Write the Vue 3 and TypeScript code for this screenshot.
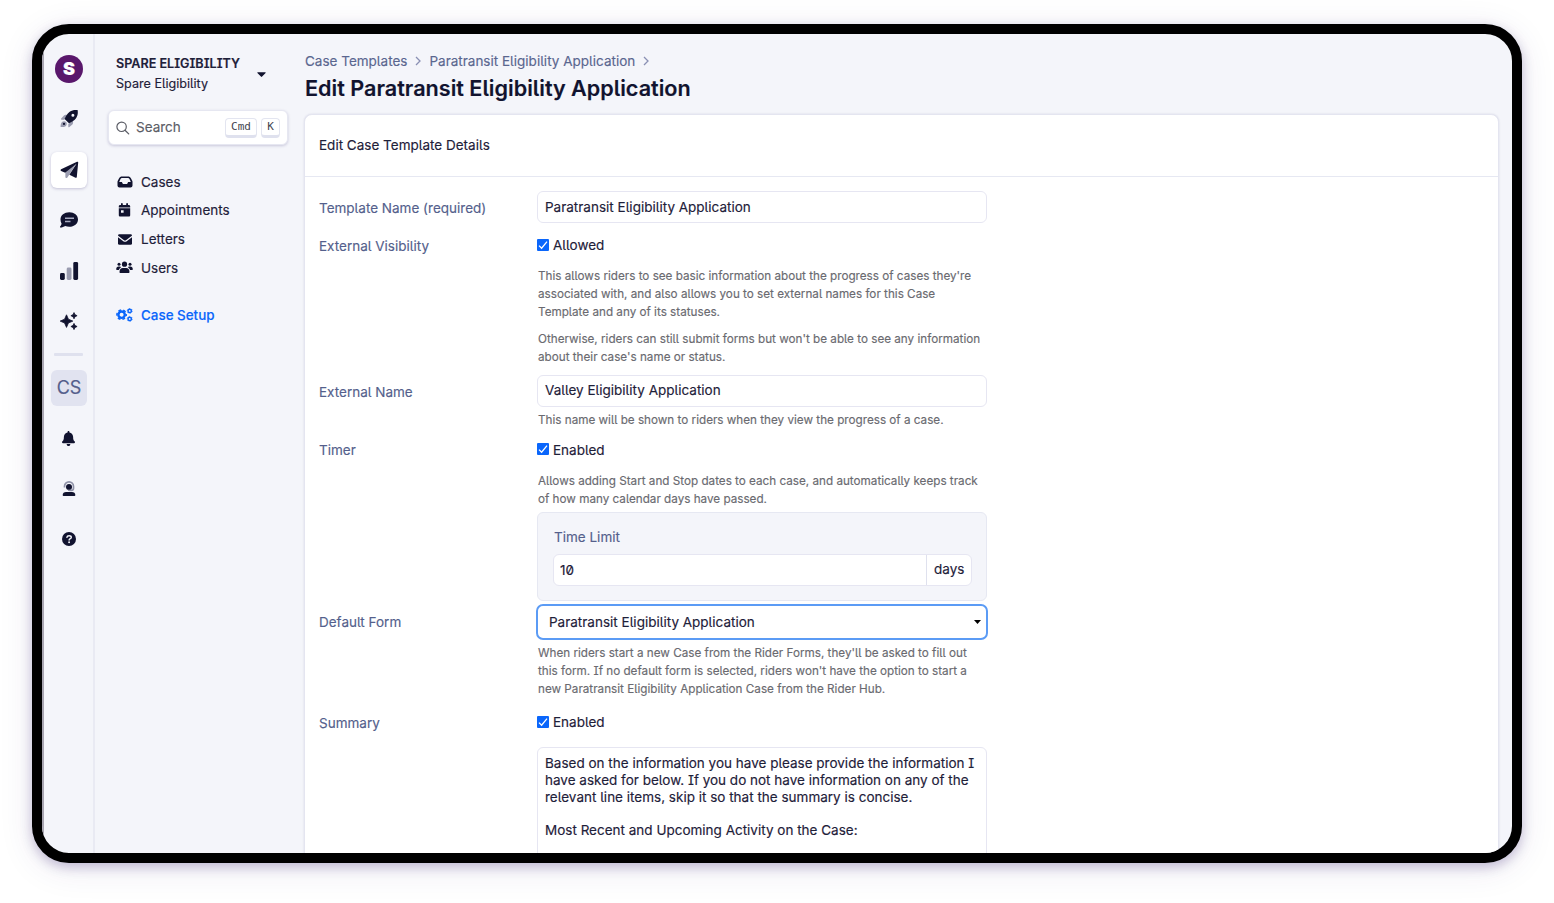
<script setup lang="ts">
interface NavItem { label: string; icon: string }

const nav: NavItem[] = [
  { label: 'Cases', icon: 'inbox' },
  { label: 'Appointments', icon: 'calendar' },
  { label: 'Letters', icon: 'envelope' },
  { label: 'Users', icon: 'users' },
]
const templateName = 'Paratransit Eligibility Application'
const externalName = 'Valley Eligibility Application'
</script>

<template>
  <div class="stage">
    <div class="device">
      <aside class="rail">
        <div class="rail-item">
          <span class="logo">S</span>
        </div>
        <div class="rail-item">
          <svg width="20" height="20" viewBox="0 0 20 20">
            <path class="dim" d="M2.200 9.600 5 6.400c.5-.5 1.100-.7 1.800-.6l2 .2-3.600 4.800-2.600-.1c-.6 0-.8-.6-.4-1.100zM14 11.200l.1 2.400c0 .7-.2 1.300-.7 1.800l-3 2.700c-.5.4-1.100.2-1.100-.4V14.900zM3 13c1.300-1.200 3.200-1 4.100 0s1 2.700-.2 3.900c-1 1-3.300 1.300-5.300 1.200C1.500 16.200 1.900 14 3 13z" />
            <path class="ink" fill-rule="evenodd" d="M18.600 1.100c.5 2.500.3 5.400-1.400 7.800-1.700 2.400-4.300 4-7.200 5.300L5.600 9.900c1.200-2.800 2.700-5.500 5.100-7.200C13.100 1 16.100.6 18.600 1.100zM13.900 7.800a1.500 1.500 0 1 0 0-3 1.500 1.500 0 0 0 0 3z" />
            <circle class="ink" cx="5" cy="14.900" r="1.100" />
          </svg>
        </div>
        <div class="rail-item selected">
          <svg width="19" height="18" viewBox="0 0 19 18">
            <path class="dim" d="M5.400 11.700 16.500 2 9.400 13.600 7.200 16.700c-.5.6-1.800.3-1.800-.5z" />
            <path class="ink" d="M18.200 1.500 16.800 15.900c-.1.700-.7 1-1.300.8l-6.100-2.900L16.500 2.800 5.200 11.800 1.100 10c-.8-.4-.7-1.300 0-1.700L17 .8c.7-.4 1.300 0 1.200.7z" />
          </svg>
        </div>
        <div class="rail-item">
          <svg width="20" height="18" viewBox="0 0 20 18">
            <path class="ink" d="M10.300 1.300c4.900 0 8.700 3 8.700 7.200s-3.800 7.300-8.700 7.300c-1.500 0-2.900-.3-4.100-.8-1.200.9-3 1.500-4.800 1.500-.5 0-.7-.6-.3-1 .8-.8 1.300-1.800 1.500-2.700C1.900 11.500 1.500 10 1.500 8.500c0-4.200 3.900-7.200 8.800-7.200z" />
            <path d="M6 7.200h9M6 10.600h5.500" fill="none" stroke="#a8abc0" stroke-width="1.500" />
          </svg>
        </div>
        <div class="rail-item bars">
          <svg width="20" height="20" viewBox="0 0 20 20">
            <rect class="ink" x="1" y="12" width="4.800" height="7" rx="1.400" />
            <rect class="dim" x="7.700" y="6.500" width="4.800" height="12.500" rx="1.400" />
            <rect class="ink" x="14.300" y="1" width="4.800" height="18" rx="1.400" />
          </svg>
        </div>
        <div class="rail-item sparkle">
          <svg width="20" height="18" viewBox="0 0 20 18">
            <path class="ink" d="M7.500 2.800 9.400 7.200 13.800 9.100 9.400 11 7.500 15.400 5.600 11 1.200 9.100 5.600 7.200z M15 .6l1 2.100 2.100 1-2.100 1L15 6.800l-1-2.100-2.100-1 2.100-1zM15 11.400l1 2.100 2.100 1-2.100 1-1 2.100-1-2.100-2.100-1 2.100-1z" stroke="#11132f" stroke-width=".8" stroke-linejoin="round" />
          </svg>
        </div>
        <div class="divider"></div>
        <div class="avatar">CS</div>
        <div class="rail-item nudge">
          <svg width="13" height="15" viewBox="0 0 448 512">
            <path class="ink" d="M224 0c-17.700 0-32 14.300-32 32V51.200C119 66 64 130.600 64 208v18.800c0 47-17.300 92.400-48.500 127.600l-7.400 8.300c-8.400 9.400-10.400 22.900-5.300 34.400S19.400 416 32 416H416c12.600 0 24-7.400 29.200-18.900s3.100-25-5.300-34.400l-7.400-8.300C401.300 319.200 384 273.900 384 226.800V208c0-77.400-55-142-128-156.800V32c0-17.700-14.300-32-32-32zm45.300 493.300c12-12 18.700-28.300 18.700-45.300H160c0 17 6.700 33.300 18.700 45.300s28.300 18.700 45.300 18.700s33.300-6.700 45.300-18.700z" />
          </svg>
        </div>
        <div class="rail-item nudge">
          <svg width="14" height="16" viewBox="0 0 14 16">
            <path d="M2.500 6.600V5.400a4.500 4.500 0 0 1 9 0v1.800c0 1.300-.9 2.200-2.200 2.200H7.300" fill="none" stroke="#8f92a8" stroke-width="1.700" />
            <circle class="ink" cx="7" cy="5.900" r="3" />
            <path class="ink" d="M4 11h6c1.900 0 3.300 1.200 3.300 2.900 0 .7-.4 1.100-1.100 1.100H1.800c-.7 0-1.100-.4-1.100-1.100C.7 12.200 2.100 11 4 11z" />
            <path d="M6 9.300h3.300" stroke="#8f92a8" stroke-width="1.200" />
          </svg>
        </div>
        <div class="rail-item">
          <svg width="14" height="14" viewBox="0 0 14 14">
            <circle class="ink" cx="7" cy="7" r="7" />
            <path d="M4.900 5.400c.1-1.100 1-1.700 2.200-1.700s2.200.7 2.200 1.700c0 1.300-2.200 1.300-2.200 2.700" fill="none" stroke="#f4f5fa" stroke-width="1.400" stroke-linecap="round" />
            <circle cx="7.100" cy="10.200" r=".95" fill="#f4f5fa" />
          </svg>
        </div>
      </aside>

      <nav class="side">
        <div class="org">
          <div>
            <div class="org-name">SPARE ELIGIBILITY</div>
            <div class="org-sub">Spare Eligibility</div>
          </div>
          <svg width="9" height="5" viewBox="0 0 9 5"><path class="ink" d="M.8.300h7.400c.5 0 .7.500.4.800L5.100 4.600a.8.800 0 0 1-1.200 0L.4 1.100C.1.800.3.300.8.300z" /></svg>
        </div>
        <div class="search">
          <svg width="14" height="14" viewBox="0 0 14 14"><circle cx="5.600" cy="5.800" r="4.700" fill="none" stroke="#5b5d66" stroke-width="1.200" /><path d="M9 9.300 12.700 12.900" stroke="#5b5d66" stroke-width="1.300" stroke-linecap="round" /></svg>
          <span class="search-text">Search</span>
          <kbd class="k-cmd">Cmd</kbd>
          <kbd class="k-k">K</kbd>
        </div>
        <ul class="menu">
          <li v-for="n in nav" :key="n.label">
            <span class="mi">
              <svg v-if="n.icon === 'inbox'" width="16" height="12" viewBox="0 0 16 12">
                <path class="ink" fill-rule="evenodd" d="M5 .5h6c1.300 0 2.300.6 2.900 1.700l1.300 2.500c.2.400.3.800.3 1.300v3.500c0 1.100-.9 2-2 2h-11c-1.100 0-2-.9-2-2V6c0-.5.1-.9.300-1.300l1.300-2.500C2.700 1.100 3.700.5 5 .5zM5 2.100c-.7 0-1.200.3-1.500.9L2.200 6h2.700l1 1.900h4.200l1-1.900h2.700L12.500 3c-.3-.6-.8-.9-1.500-.9z" />
              </svg>
              <svg v-else-if="n.icon === 'calendar'" width="13" height="14" viewBox="0 0 13 14">
                <path class="ink" fill-rule="evenodd" d="M3 .9a.9.900 0 0 1 1.800 0V2h3.400V.9a.9.900 0 0 1 1.800 0V2h.8c.8 0 1.400.6 1.400 1.300v1.100H.8V3.300C.8 2.600 1.400 2 2.200 2H3zM.8 5.300h11.400v6.900c0 .7-.6 1.300-1.400 1.300H2.200c-.8 0-1.400-.6-1.400-1.300zM3 7.300v2.400h2.600V7.300z" />
              </svg>
              <svg v-else-if="n.icon === 'envelope'" width="14" height="11" viewBox="0 0 14 11">
                <rect class="ink" width="14" height="10.600" y=".2" rx="1.400" />
                <path d="M-.2 2.300 6 6.900c.6.400 1.400.4 2 0l6.200-4.600" fill="none" stroke="#f4f5fa" stroke-width="1.200" />
              </svg>
              <svg v-else width="17" height="13" viewBox="0 0 17 13">
                <g class="ink">
                  <circle cx="8.500" cy="3.200" r="2.600" /><circle cx="3" cy="3.200" r="1.500" /><circle cx="14" cy="3.200" r="1.500" />
                  <path d="M6.800 7h3.400c2 0 3.300 1.600 3.300 3.900 0 .6-.4 1.100-1 1.100h-8c-.6 0-1-.5-1-1.100C3.500 8.600 4.800 7 6.800 7zM.2 8.300c0-1.600 1-2.700 2.400-2.700h1c.7 0 1.300.2 1.600.6-1.200.6-2 1.600-2.300 2.700H.8c-.3 0-.6-.2-.6-.6zM16.800 8.300c0-1.600-1-2.700-2.400-2.700h-1c-.7 0-1.300.2-1.600.6 1.200.6 2 1.600 2.300 2.700h2.100c.3 0 .6-.2.6-.6z" />
                </g>
              </svg>
            </span>
            <span>{{ n.label }}</span>
          </li>
          <li class="active">
            <span class="mi">
              <svg width="17" height="14" viewBox="0 0 17 14" fill="none" stroke="#0a66fb">
                <circle cx="5.600" cy="6.700" r="3.200" stroke-width="2.400" />
                <circle cx="5.600" cy="6.700" r="4.700" stroke-width="1.500" stroke-dasharray="2.800 2.122" stroke-dashoffset="1.400" />
                <circle cx="13.700" cy="2.900" r="1.700" stroke-width="1.500" />
                <circle cx="13.700" cy="2.900" r="2.500" stroke-width=".7" stroke-dasharray="1.310 1.310" />
                <circle cx="13.700" cy="10.900" r="1.700" stroke-width="1.500" />
                <circle cx="13.700" cy="10.900" r="2.500" stroke-width=".7" stroke-dasharray="1.310 1.310" />
              </svg>
            </span>
            <span>Case Setup</span>
          </li>
        </ul>
      </nav>

      <main class="main">
        <div class="crumbs">
          <span>Case Templates</span>
          <svg width="6" height="10" viewBox="0 0 6 10"><path d="M1 1l4 4-4 4" /></svg>
          <span>{{ templateName }}</span>
          <svg width="6" height="10" viewBox="0 0 6 10"><path d="M1 1l4 4-4 4" /></svg>
        </div>
        <h1>Edit {{ templateName }}</h1>
        <section class="card">
          <header>Edit Case Template Details</header>
          <div class="form">
            <div class="row r-name">
              <label>Template Name (required)</label>
              <div class="input">{{ templateName }}</div>
            </div>
            <div class="row r-vis">
              <label>External Visibility</label>
              <div>
                <div class="check"><i><svg width="12" height="12" viewBox="0 0 12 12"><path d="M2 6.600 4.600 9.200 10 2.700" /></svg></i><span>Allowed</span></div>
                <p class="help first">This allows riders to see basic information about the progress of cases they're<br>associated with, and also allows you to set external names for this Case<br>Template and any of its statuses.</p>
                <p class="help second">Otherwise, riders can still submit forms but won't be able to see any information<br>about their case's name or status.</p>
              </div>
            </div>
            <div class="row r-ext">
              <label>External Name</label>
              <div>
                <div class="input">{{ externalName }}</div>
                <p class="help under">This name will be shown to riders when they view the progress of a case.</p>
              </div>
            </div>
            <div class="row r-timer">
              <label>Timer</label>
              <div>
                <div class="check"><i><svg width="12" height="12" viewBox="0 0 12 12"><path d="M2 6.600 4.600 9.200 10 2.700" /></svg></i><span>Enabled</span></div>
                <p class="help first">Allows adding Start and Stop dates to each case, and automatically keeps track<br>of how many calendar days have passed.</p>
                <div class="limit">
                  <div class="limit-label">Time Limit</div>
                  <div class="group"><span class="num">10</span><span class="unit">days</span></div>
                </div>
              </div>
            </div>
            <div class="row r-default">
              <label>Default Form</label>
              <div>
                <div class="select"><span>{{ templateName }}</span><svg width="7" height="4" viewBox="0 0 7 4"><path d="M0 0h7L3.500 4z" /></svg></div>
                <p class="help under">When riders start a new Case from the Rider Forms, they'll be asked to fill out<br>this form. If no default form is selected, riders won't have the option to start a<br>new Paratransit Eligibility Application Case from the Rider Hub.</p>
              </div>
            </div>
            <div class="row r-summary">
              <label>Summary</label>
              <div>
                <div class="check"><i><svg width="12" height="12" viewBox="0 0 12 12"><path d="M2 6.600 4.600 9.200 10 2.700" /></svg></i><span>Enabled</span></div>
                <div class="area">Based on the information you have please provide the information I<br>have asked for below. If you do not have information on any of the<br>relevant line items, skip it so that the summary is concise.<br><br>Most Recent and Upcoming Activity on the Case:</div>
              </div>
            </div>
          </div>
        </section>
      </main>
    </div>
  </div>
</template>

<style>
body { margin: 0; background: #fff; }
</style>

<style scoped>
* { box-sizing: border-box; }
.stage { width: 1554px; height: 903px; padding: 24px 32px; overflow: hidden; background: #fff; font-family: Inter, "Liberation Sans", sans-serif; font-size: 13.500px; font-feature-settings: "ss02"; white-space: nowrap; color: #1e2039; -webkit-text-stroke: .15px; }
.device { display: flex; width: 1490px; height: 839px; border: 10px solid #000; border-radius: 37px; overflow: hidden; background: #f4f5fa; box-shadow: 0 4px 12px rgba(60, 40, 120, .28), 0 6px 34px rgba(60, 40, 120, .1); }
.ink { fill: #11132f; }
.dim { fill: #9a9cb0; }

.rail { flex: none; width: 53px; border-left: 2px solid #a9a6b2; border-right: 2px solid #e9eaf3; padding: 16.500px 0 0 7px; display: flex; flex-direction: column; gap: 14.400px; }
.rail-item { width: 36px; height: 36px; flex: none; display: flex; align-items: center; justify-content: center; border-radius: 6px; }
.selected { background: #fff; box-shadow: 0 1px 3px rgba(50, 40, 110, .25); margin: .5px 0 -.5px; }
.bars { padding-top: 2px; }
.sparkle { padding-top: 1px; }
.nudge { padding-right: 1px; }
.logo { width: 28px; height: 28px; margin-top: 1px; border-radius: 50%; background: #59176b; color: #fff; font-weight: 900; font-size: 18px; line-height: 28px; text-align: center; }
.divider { flex: none; width: 29px; height: 3px; margin-left: 3px; background: #dfe1ee; border-radius: 1px; }
.avatar { flex: none; width: 36px; height: 36px; margin-top: -.5px; border-radius: 6px; background: #e1e3f0; color: #545f8c; font-size: 18px; line-height: 35px; text-align: center; }

.side { flex: none; width: 209px; padding: 19px 0 0 13px; }
.org { display: flex; align-items: center; height: 42px; padding-left: 8px; }
.org > div { height: 42px; padding-top: 1px; }
.org-name { width: 141px; font-size: 12.600px; font-weight: 600; line-height: 20px; height: 20px; }
.org-sub { font-size: 12.600px; line-height: 20px; height: 20px; }
.search { display: flex; align-items: center; width: 180px; height: 35px; margin-top: 15px; padding: 0 7px; background: #fff; border: 1px solid #e6e7f1; border-radius: 6px; box-shadow: 0 1px 3px rgba(50, 40, 110, .22); color: #5b5d66; }
.search-text { margin-left: 6px; width: 89px; line-height: 16px; padding-bottom: 1px; }
kbd { flex: none; height: 20px; border: 1px solid #e3e5f0; border-bottom: 3px solid #dfe1ee; border-radius: 4px; font: 11px/15px "DejaVu Sans Mono", monospace; text-align: center; color: #44464f; -webkit-text-stroke: 0; }
.k-cmd { width: 32px; margin-right: 4px; }
.k-k { width: 19px; }
.menu { list-style: none; margin: 22.300px 0 0; padding: 0; }
.menu li { display: flex; align-items: center; height: 28.700px; padding-left: 8px; }
.mi { width: 17px; margin-right: 8px; display: flex; justify-content: center; }
.menu .active { margin-top: 18.500px; color: #0a66fb; font-size: 13.400px; font-weight: 500; }

.main { flex: none; width: 1208px; padding: 17px 0 0; }
.crumbs { display: flex; align-items: center; height: 20px; padding-left: 1px; color: #5a668f; }
.crumbs svg { margin: 0 8px; fill: none; stroke: #8a90b3; stroke-width: 1.300; }
h1 { margin: 0; padding-left: 1px; font-size: 21.600px; font-weight: 600; line-height: 34px; height: 43px; color: #11132f; }
.card { width: 1195px; height: 800px; background: #fff; border: 1px solid #e4e5f0; border-radius: 8px; box-shadow: 0 0 2px rgba(50, 40, 110, .15); }
header { height: 62px; padding-left: 14px; line-height: 61px; border-bottom: 1px solid #e6e8f2; }
.form { padding: 14px 0 0 14px; }
.row { display: grid; grid-template-columns: 218px 450px; align-items: start; }
label { color: #545f8c; line-height: 20px; }
.input { height: 32px; border: 1px solid #e6e6f2; border-radius: 6px; padding: 0 7px; line-height: 30px; }
.r-name { height: 48px; }
.r-name label { padding-top: 7px; }
.check { display: flex; align-items: center; height: 12px; line-height: 12px; }
.check i { width: 12px; height: 12px; margin-right: 4px; background: #0a66fb; border-radius: 1px; display: flex; }
.check svg { fill: none; stroke: #fff; stroke-width: 1.300; }
.help { margin: 0; padding-left: 1px; font-size: 11.700px; line-height: 18px; color: #6a6a70; }
.help.first { margin-top: 16px; }
.help.second { margin-top: 9px; }
.r-vis { height: 136px; }
.r-vis label { margin-top: -3px; }
.r-ext { height: 68px; }
.r-ext label { padding-top: 7px; }
.r-ext .input { line-height: 29px; }
.help.under { margin-top: 4px; }
.r-timer { height: 161px; }
.r-timer label { margin-top: -3px; }
.r-timer .check span { padding-top: 2px; }
.r-timer .help.first { margin-top: 17px; }
.limit { height: 89px; margin-top: 4px; padding: 14px 15px; background: #f4f5fa; border: 1px solid #e6e8f2; border-radius: 6px; }
.limit-label { line-height: 20px; height: 27px; padding-left: 1px; color: #545f8c; }
.group { display: flex; width: 419px; height: 32px; background: #fff; border: 1px solid #e6e6f2; border-radius: 6px; line-height: 30px; }
.num { flex: 1; padding-left: 6px; }
.unit { width: 45px; border-left: 1px solid #dfe1ee; padding-left: 7px; line-height: 29px; }
.r-default { height: 112px; }
.r-default label { padding-top: 8px; }
.select { display: flex; align-items: center; justify-content: space-between; width: 452px; height: 36px; margin-left: -1px; padding: 0 5px 0 11px; border: 2px solid #5b9bf5; border-radius: 7px; }
.r-summary label { margin-top: -3px; }
.area { margin-top: 19px; height: 200px; border: 1px solid #e6e6f2; border-radius: 6px; padding: 7px; line-height: 16.800px; }
</style>
